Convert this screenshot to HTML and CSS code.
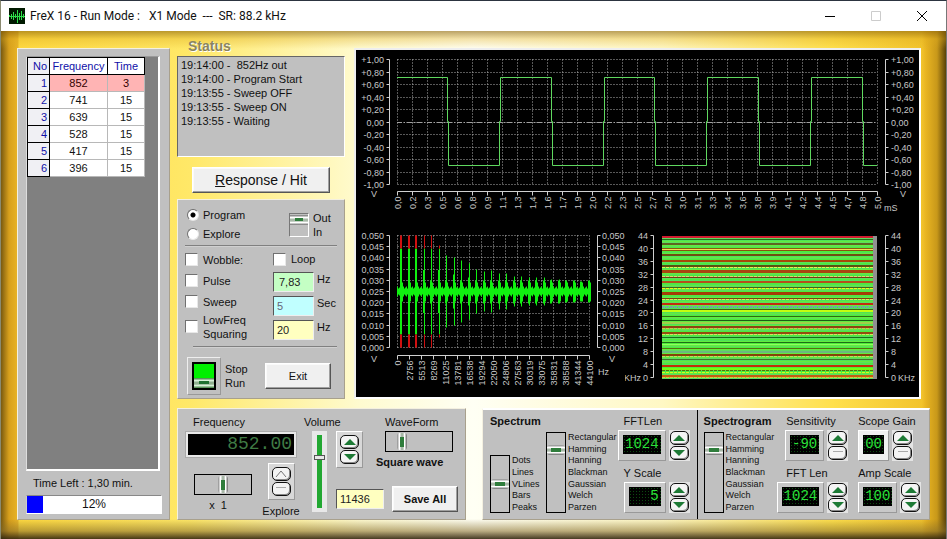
FILE: index.html
```html
<!DOCTYPE html>
<html lang="en">
<head>
    <meta charset="UTF-8">
    <meta name="viewport" content="width=device-width, initial-scale=1.0">
    <title>FreX 16</title>
    <link rel="stylesheet" href="styles.css">
</head>
<body>
    <header class="titlebar">
        <svg class="app-icon" viewBox="0 0 16 16">
            <rect width="16" height="16" fill="#001a00"/>
            <path d="M0.5 7v2M2.5 6v5M4.5 4v8M6.5 6v4M8.5 2v13M10.5 5v7M12.5 3v9M14.5 6v4M0 8.5h16" stroke="#2fe04a" fill="none"/>
        </svg>
        <h1>FreX 16 - Run Mode :   X1 Mode  ---  SR: 88.2 kHz</h1>
        <div class="window-buttons">
            <button aria-label="Minimize"><svg viewBox="0 0 12 12"><path d="M1 6.5h10" stroke="#000"/></svg></button>
            <button aria-label="Maximize" disabled><svg viewBox="0 0 12 12"><path d="M1.5 1.5h9v9h-9z" stroke="#ccc" fill="none"/></svg></button>
            <button aria-label="Close"><svg viewBox="0 0 12 12"><path d="M1 1l10 10M11 1L1 11" stroke="#000"/></svg></button>
        </div>
    </header>

    <main class="frame">
        <section class="panel program-panel">
            <div class="program-list">
                <table>
                    <thead>
                        <tr><th>No</th><th>Frequency</th><th>Time</th></tr>
                    </thead>
                    <tbody>
                        <tr class="active"><th>1</th><td>852</td><td>3</td></tr>
                        <tr><th>2</th><td>741</td><td>15</td></tr>
                        <tr><th>3</th><td>639</td><td>15</td></tr>
                        <tr><th>4</th><td>528</td><td>15</td></tr>
                        <tr><th>5</th><td>417</td><td>15</td></tr>
                        <tr><th>6</th><td>396</td><td>15</td></tr>
                    </tbody>
                </table>
            </div>
            <p class="time-left">Time Left : 1,30 min.</p>
            <div class="progress">
                <div class="progress-fill" style="width: 12%"></div>
                <span>12%</span>
            </div>
        </section>

        <div class="workspace">
            <div class="upper">
                <div class="side">
                    <h2 class="status-title">Status</h2>
                    <div class="status-log">
                        <p>19:14:00 -&nbsp; 852Hz out</p>
                        <p>19:14:00 - Program Start</p>
                        <p>19:13:55 - Sweep OFF</p>
                        <p>19:13:55 - Sweep ON</p>
                        <p>19:13:55 - Waiting</p>
                    </div>
                    <button class="btn btn-response"><u>R</u>esponse / Hit</button>

                    <section class="panel controls">
                        <div class="mode-row">
                            <div class="modes">
                                <label><input type="radio" name="mode" checked>Program</label>
                                <label><input type="radio" name="mode">Explore</label>
                            </div>
                            <label class="out-in"><input type="checkbox" class="toggle"><span>Out<br>In</span></label>
                        </div>
                        <hr>
                        <div class="options">
                            <div class="option-checks">
                                <label><input type="checkbox">Wobble:</label>
                                <label><input type="checkbox">Pulse</label>
                                <label><input type="checkbox">Sweep</label>
                                <label class="two-line"><input type="checkbox"><span>LowFreq<br>Squaring</span></label>
                            </div>
                            <div class="option-values">
                                <label class="loop"><input type="checkbox">Loop</label>
                                <label><input type="text" class="field green" value="7,83">Hz</label>
                                <label><input type="text" class="field cyan" value="5">Sec</label>
                                <label><input type="text" class="field yellow" value="20">Hz</label>
                            </div>
                        </div>
                        <hr class="short">
                        <div class="run-row">
                            <label class="run-label"><span class="run-well"><input type="checkbox" class="run-toggle" checked></span><span>Stop<br>Run</span></label>
                            <button class="btn btn-exit">Exit</button>
                        </div>
                    </section>
                </div>

                <section class="scope">
                    <svg id="oscilloscope" viewBox="0 0 563 166"></svg>
                    <div class="scope-lower">
                        <svg id="spectrum" viewBox="0 0 269 181"></svg>
                        <svg id="spectrogram" viewBox="0 0 294 181"></svg>
                    </div>
                </section>
            </div>

            <div class="lower">
                <section class="panel generator">
                    <div class="frequency">
                        <label for="freq">Frequency</label>
                        <output id="freq" class="led led-wide">852.00</output>
                        <div class="frequency-row">
                            <div class="multiplier">
                                <input type="range" id="mult" class="slider-h" min="0" max="100" value="50">
                                <label for="mult">x&nbsp; 1</label>
                            </div>
                            <div class="explore">
                                <div class="spin raised">
                                    <button aria-label="Explore up"><svg viewBox="0 0 12 8"><path d="M1 7L6 1L11 7" fill="none" stroke="#777"/></svg></button>
                                    <button aria-label="Explore down"><svg viewBox="0 0 12 8"><path d="M1 2.5h10" stroke="#aaa"/></svg></button>
                                </div>
                                <span>Explore</span>
                            </div>
                        </div>
                    </div>
                    <div class="volume">
                        <label for="volume">Volume</label>
                        <input type="range" id="volume" class="slider-volume" min="0" max="100" value="68">
                    </div>
                    <div class="output">
                        <div class="output-row">
                            <div class="spin raised">
                                <button aria-label="Volume up"><svg viewBox="0 0 12 8"><path d="M0 7L6 1L12 7z" fill="#1d7a35"/></svg></button>
                                <button aria-label="Volume down"><svg viewBox="0 0 12 8"><path d="M0 1L6 7L12 1z" fill="#1d7a35"/></svg></button>
                            </div>
                            <div class="waveform">
                                <label for="wave">WaveForm</label>
                                <input type="range" id="wave" class="slider-h" min="0" max="100" value="20">
                                <strong>Square wave</strong>
                            </div>
                        </div>
                        <div class="output-row save-row">
                            <input type="text" class="field yellow" value="11436" aria-label="Sample count">
                            <button class="btn btn-save">Save All</button>
                        </div>
                    </div>
                </section>

                <section class="panel analysis">
                    <div class="analyzer spectrum-settings">
                        <div class="column style-column">
                            <h3>Spectrum</h3>
                            <div class="select-slider">
                                <input type="range" class="slider-v slider-short" min="0" max="4" value="2" aria-label="Draw style">
                                <ul class="options-list short-list">
                                    <li>Dots</li><li>Lines</li><li>VLines</li><li>Bars</li><li>Peaks</li>
                                </ul>
                            </div>
                        </div>
                        <div class="column window-column">
                            <div class="select-slider">
                                <input type="range" class="slider-v" min="0" max="6" value="5" aria-label="Spectrum window">
                                <ul class="options-list">
                                    <li>Rectangular</li><li>Hamming</li><li>Hanning</li><li>Blackman</li><li>Gaussian</li><li>Welch</li><li>Parzen</li>
                                </ul>
                            </div>
                        </div>
                        <div class="column meters meters-end">
                            <div class="meter">
                                <label for="fftlen">FFTLen</label>
                                <div class="meter-row">
                                    <div class="led-box"><output id="fftlen" class="led">1024</output></div>
                                    <div class="spin">
                                        <button aria-label="FFTLen up"><svg viewBox="0 0 12 8"><path d="M0 7L6 1L12 7z" fill="#1d7a35"/></svg></button>
                                        <button aria-label="FFTLen down"><svg viewBox="0 0 12 8"><path d="M0 1L6 7L12 1z" fill="#1d7a35"/></svg></button>
                                    </div>
                                </div>
                            </div>
                            <div class="meter">
                                <label for="yscale">Y Scale</label>
                                <div class="meter-row">
                                    <div class="led-box"><output id="yscale" class="led three">5</output></div>
                                    <div class="spin">
                                        <button aria-label="Y Scale up"><svg viewBox="0 0 12 8"><path d="M0 7L6 1L12 7z" fill="#1d7a35"/></svg></button>
                                        <button aria-label="Y Scale down"><svg viewBox="0 0 12 8"><path d="M0 1L6 7L12 1z" fill="#1d7a35"/></svg></button>
                                    </div>
                                </div>
                            </div>
                        </div>
                    </div>

                    <div class="analyzer spectrogram-settings">
                        <div class="column spectrogram-column">
                            <h3>Spectrogram</h3>
                            <div class="select-slider">
                                <input type="range" class="slider-v" min="0" max="6" value="5" aria-label="Spectrogram window">
                                <ul class="options-list">
                                    <li>Rectangular</li><li>Hamming</li><li>Hanning</li><li>Blackman</li><li>Gaussian</li><li>Welch</li><li>Parzen</li>
                                </ul>
                            </div>
                        </div>
                        <div class="column meters sensitivity">
                            <div class="meter">
                                <label for="sens">Sensitivity</label>
                                <div class="meter-row">
                                    <div class="led-box"><output id="sens" class="led">-90</output></div>
                                    <div class="spin">
                                        <button aria-label="Sensitivity up"><svg viewBox="0 0 12 8"><path d="M0 7L6 1L12 7z" fill="#1d7a35"/></svg></button>
                                        <button aria-label="Sensitivity down"><svg viewBox="0 0 12 8"><path d="M1 2.5h10" stroke="#aaa"/></svg></button>
                                    </div>
                                </div>
                            </div>
                            <div class="meter">
                                <label for="fftlen2">FFT Len</label>
                                <div class="meter-row">
                                    <div class="led-box"><output id="fftlen2" class="led">1024</output></div>
                                    <div class="spin">
                                        <button aria-label="FFT Len up"><svg viewBox="0 0 12 8"><path d="M0 7L6 1L12 7z" fill="#1d7a35"/></svg></button>
                                        <button aria-label="FFT Len down"><svg viewBox="0 0 12 8"><path d="M0 1L6 7L12 1z" fill="#1d7a35"/></svg></button>
                                    </div>
                                </div>
                            </div>
                        </div>
                        <div class="column meters gain">
                            <div class="meter">
                                <label for="gain">Scope Gain</label>
                                <div class="meter-row">
                                    <div class="led-box bright"><output id="gain" class="led">00</output></div>
                                    <div class="spin">
                                        <button aria-label="Scope Gain up"><svg viewBox="0 0 12 8"><path d="M0 7L6 1L12 7z" fill="#1d7a35"/></svg></button>
                                        <button aria-label="Scope Gain down"><svg viewBox="0 0 12 8"><path d="M1 2.5h10" stroke="#aaa"/></svg></button>
                                    </div>
                                </div>
                            </div>
                            <div class="meter">
                                <label for="amp">Amp Scale</label>
                                <div class="meter-row">
                                    <div class="led-box"><output id="amp" class="led">100</output></div>
                                    <div class="spin">
                                        <button aria-label="Amp Scale up"><svg viewBox="0 0 12 8"><path d="M0 7L6 1L12 7z" fill="#1d7a35"/></svg></button>
                                        <button aria-label="Amp Scale down"><svg viewBox="0 0 12 8"><path d="M0 1L6 7L12 1z" fill="#1d7a35"/></svg></button>
                                    </div>
                                </div>
                            </div>
                        </div>
                    </div>
                </section>
            </div>
        </div>
    </main>

    <script src="script.js"></script>
</body>
</html>
```

FILE: styles.css
```css
* {
    margin: 0;
    padding: 0;
    box-sizing: border-box;
    font-family: "Liberation Sans", Arial, sans-serif;
}
body {
    display: flex;
    flex-direction: column;
    min-height: 100vh;
    font-size: 11px;
    line-height: 14px;
    color: #111;
    background: #fff;
    border-top: 1px solid #2c3440;
    border-left: 1px solid #8a8a70;
    border-right: 1px solid #777;
}
button {
    cursor: pointer;
}

/* Title bar */
.titlebar {
    display: flex;
    align-items: center;
    height: 30px;
    padding: 0 18px 0 8px;
    background: #fff;
}
.app-icon {
    width: 16px;
    height: 16px;
    margin-right: 5px;
}
.titlebar h1 {
    font-family: Roboto, "Open Sans", sans-serif;
    font-size: 12px;
    font-weight: normal;
    white-space: pre;
}
.window-buttons {
    display: flex;
    gap: 34px;
    margin-left: auto;
}
.window-buttons button {
    width: 12px;
    height: 12px;
    border: none;
    background: none;
}
.window-buttons svg {
    display: block;
}

/* Golden frame */
.frame {
    flex: 1;
    display: flex;
    gap: 7px;
    padding: 8px 17px 19px 16px;
    background:
        linear-gradient(to bottom, rgba(140, 100, 10, 0.6), rgba(220, 170, 30, 0.35) 8px, transparent 18px),
        linear-gradient(to top, rgba(50, 38, 15, 0.9), rgba(130, 105, 40, 0.55) 8px, transparent 20px),
        linear-gradient(to right, #7a5a10, #d8a01c 8px, #e8b428 17px, transparent 18px),
        linear-gradient(to left, #5a4208, #c8981a 9px, #e8b422 20px, transparent 24px),
        linear-gradient(to right, #ffd83c, #ffe868 20%, #fffbd0 38%, #fffff4 50%, #fff8c4 70%, #ffe04c 88%, #efbc24);
}

.panel {
    background: #c0c0c0;
    border: 1px solid;
    border-color: #f4f0e0 #a8a08c #a8a08c #f4f0e0;
}

/* Program list */
.program-panel {
    display: flex;
    flex-direction: column;
    flex: none;
    width: 153px;
    margin-top: 9px;
    padding: 7px 7px 5px 8px;
}
.program-list {
    flex: 1;
    margin-right: 2px;
    background: #808080;
    border: 1px solid;
    border-color: #999 #fff #fff #ddd;
    border-right-width: 2px;
    border-bottom-width: 2px;
}
.program-list table {
    border-collapse: collapse;
    background: #fff;
    text-align: center;
    border: 1px solid #000;
    border-left-color: #fff;
}
.program-list th,
.program-list td {
    height: 17px;
    line-height: 14px;
    border: 1px solid #b8b8b8;
}
.program-list th {
    font-weight: normal;
    color: #1010a8;
    width: 37px;
    border-color: #000;
}
.program-list th:first-child {
    width: 22px;
    padding-right: 2px;
    text-align: right;
    background: #f0f0f4;
}
.program-list th:nth-child(2) {
    width: 58px;
}
.program-list tr.active td {
    background: #ffb4b4;
    color: #300;
}
.time-left {
    padding: 5px 7px;
}
.progress {
    display: grid;
    height: 19px;
    background: #fff;
    border: 1px solid;
    border-color: #888 #fff #fff #ccc;
}
.progress-fill,
.progress span {
    grid-area: 1 / 1;
}
.progress-fill {
    background: #0000ff;
}
.progress span {
    text-align: center;
    font-size: 12px;
    line-height: 17px;
}

.workspace {
    flex: 1;
    display: flex;
    flex-direction: column;
    gap: 9px;
    min-width: 0;
}
.upper {
    flex: 1;
    display: flex;
    gap: 9px;
    padding-right: 8px;
}
.side {
    display: flex;
    flex-direction: column;
    flex: none;
    width: 168px;
}
.status-title {
    padding-left: 11px;
    font-size: 14px;
    line-height: 15px;
    color: #8a8560;
    text-shadow: 1px 1px #fff;
}
.status-log {
    height: 101px;
    margin-top: 2px;
    padding: 1px 3px;
    background: #c0c0c0;
    border: 1px solid;
    border-color: #666 #fff #fff #666;
}

.btn {
    background: #f0f0f0;
    border: 1px solid;
    border-color: #fff #555 #555 #fff;
    box-shadow: inset -1px -1px #a0a0a0, inset 1px 1px #fafafa;
    color: #111;
}
.btn-response {
    width: 138px;
    height: 26px;
    margin: 10px 0 6px 15px;
    font-size: 14px;
}

/* Controls */
.controls {
    flex: 1;
    display: flex;
    flex-direction: column;
    padding: 5px 7px 3px;
}
.controls label {
    display: flex;
    align-items: center;
}
.controls hr {
    border: none;
    border-top: 1px solid #808080;
    border-bottom: 1px solid #d0d0d0;
}
.controls hr.short {
    margin-left: 8px;
}
.controls input[type="radio"],
.controls input[type="checkbox"] {
    appearance: none;
    flex: none;
    width: 13px;
    height: 13px;
    margin-right: 5px;
    background: #fff;
    border: 1px solid;
    border-color: #707070 #e8e8e8 #e8e8e8 #707070;
}
.controls input[type="radio"] {
    width: 12px;
    height: 12px;
    margin: 0 4px 0 2px;
    border-radius: 50%;
}
.controls input[type="radio"]:checked {
    background: radial-gradient(circle, #000 2px, #fff 3px);
}
.mode-row {
    display: flex;
    justify-content: space-between;
    height: 40px;
}
.modes label {
    height: 19px;
}
.controls input[type="checkbox"].toggle {
    width: 20px;
    height: 24px;
    margin-right: 4px;
    border-color: #777 #fff #fff #777;
    background:
        linear-gradient(#2f7d3c, #2f7d3c) 5px 4px / 8px 3px no-repeat,
        linear-gradient(#707070, #fff 25%, #a8b8a8 45%, #a8b8a8 60%, #fff 75%, #707070) 0 1px / 18px 10px no-repeat,
        #c0c0c0;
}
.out-in {
    width: 48px;
}
.options {
    display: flex;
    justify-content: space-between;
    height: 99px;
    padding-top: 2px;
}
.option-checks label {
    height: 21px;
}
.option-checks label.two-line {
    height: 29px;
}
.option-values {
    width: 64px;
}
.option-values label {
    align-items: flex-start;
    height: 20px;
    margin-bottom: 4px;
    white-space: nowrap;
}
.option-values label.loop {
    align-items: center;
    margin-bottom: 3px;
}
.field {
    width: 41px;
    height: 20px;
    padding: 0 3px;
    border: 1px solid;
    border-color: #555 #eee #eee #555;
    font-size: 11px;
    color: #222;
}
.option-values .field {
    flex: none;
    margin-right: 3px;
}
.green {
    background: #c4ffc4;
    padding-left: 5px;
}
.cyan {
    background: #c0ffff;
    color: #667;
}
.yellow {
    background: #ffffc0;
}
.run-row {
    display: flex;
    align-items: center;
    justify-content: space-between;
    padding: 9px 6px 0 2px;
}
.run-well {
    display: flex;
    align-items: center;
    justify-content: center;
    width: 34px;
    height: 38px;
    margin-right: 4px;
    border: 1px solid;
    border-color: #eee #999 #999 #eee;
}
.controls input[type="checkbox"].run-toggle {
    width: 24px;
    height: 28px;
    margin: 0;
    border: 2px solid #000;
    background:
        linear-gradient(#1f7030, #1f7030) 5px 17px / 10px 3px no-repeat,
        linear-gradient(#3c7c3c, #d8f0d8 25%, #90b090 45%, #90b090 60%, #d8f0d8 75%, #3c7c3c) 0 14px / 20px 10px no-repeat,
        #00f000;
}
.btn-exit {
    width: 66px;
    height: 26px;
    font-size: 11px;
}

/* Scope screen */
.scope {
    flex: 1;
    min-width: 0;
    margin-top: 9px;
    background: #000;
    border: 2px solid;
    border-color: #eee #fff #fff #eee;
}
.scope svg {
    display: block;
    width: 100%;
}
.scope-lower {
    display: grid;
    grid-template-columns: 269fr 294fr;
}
.scope text {
    fill: #c8c8c8;
    font-size: 9px;
}
.axis {
    stroke: #d0d0d0;
    fill: none;
}
.grid {
    stroke: #b0b0b0;
    stroke-dasharray: 1 2;
    fill: none;
}
.grid-zero {
    stroke: #a0a0a0;
    stroke-dasharray: 5 2 1 2;
}
.wave {
    stroke: #5fd85f;
    fill: none;
}
.bars {
    stroke: #10f010;
    fill: none;
}
.bars-clipped {
    stroke: #d01010;
    fill: none;
}

/* Lower panels */
.lower {
    display: flex;
    gap: 16px;
    height: 112px;
}
.generator {
    display: flex;
    flex: none;
    width: 289px;
    padding: 6px 7px 7px;
}
.frequency {
    width: 120px;
}
.frequency > label {
    display: block;
    padding-left: 8px;
}
.led {
    display: block;
    height: 19px;
    padding: 0 2px;
    background-color: #000;
    background-image: radial-gradient(#0c4a10 25%, transparent 30%);
    background-size: 3px 3px;
    font-family: "Liberation Mono", "DejaVu Sans Mono", monospace;
    font-size: 14px;
    line-height: 19px;
    color: #2be03a;
    text-align: right;
}
.led.three {
    width: 32px;
}
.led-wide {
    width: 112px;
    height: 27px;
    margin-top: 2px;
    border: 3px solid #e8e8e8;
    outline: 1px solid #aaa;
    outline-offset: -1px;
    background-image: none;
    font-size: 18px;
    line-height: 21px;
    color: #3f7a44;
}
.frequency-row {
    display: flex;
    align-items: center;
    gap: 14px;
    padding: 5px 0 0 9px;
}
.multiplier {
    width: 58px;
    padding-top: 5px;
    text-align: center;
}
.multiplier label {
    display: block;
    margin-top: 3px;
    padding-right: 10px;
}
.explore {
    display: flex;
    flex-direction: column;
    align-items: center;
    width: 30px;
}
.explore span {
    margin-top: 4px;
}

.spin {
    display: flex;
    flex-direction: column;
    gap: 1px;
    flex: none;
    padding: 1px;
    background: #e4e4e4;
}
.spin.raised {
    padding: 3px;
    border: 1px solid;
    border-color: #fff #999 #999 #fff;
    background: #d8d8d8;
}
.spin button {
    display: flex;
    align-items: center;
    justify-content: center;
    width: 19px;
    height: 14px;
    border: 1px solid #111;
    border-radius: 5px;
    background: #f4f4f4;
    box-shadow: inset -1px -1px #888;
}
.spin svg {
    width: 12px;
    height: 8px;
}

input[type="range"] {
    appearance: none;
    background: #c0c0c0;
    border: 1px solid #000;
}
.slider-h {
    display: block;
    width: 100%;
    height: 21px;
}
.slider-h::-webkit-slider-thumb {
    appearance: none;
    width: 10px;
    height: 17px;
    background:
        linear-gradient(#2f7d3c, #2f7d3c) center / 4px 10px no-repeat,
        linear-gradient(to right, #888, #fff 25%, #a8b8a8 45%, #a8b8a8 60%, #fff 75%, #666);
    border-radius: 3px;
}
.slider-v,
.slider-volume {
    writing-mode: vertical-lr;
    direction: rtl;
}
.slider-v {
    flex: none;
    width: 20px;
    height: 81px;
}
.slider-v.slider-short {
    height: 58px;
}
.slider-v::-webkit-slider-thumb {
    appearance: none;
    width: 18px;
    height: 10px;
    background:
        linear-gradient(#2f7d3c, #2f7d3c) center / 10px 4px no-repeat,
        linear-gradient(#888, #fff 25%, #a8b8a8 45%, #a8b8a8 60%, #fff 75%, #666);
    border-radius: 3px;
}
.volume {
    display: flex;
    flex-direction: column;
    gap: 2px;
    width: 33px;
    padding-left: 1px;
    white-space: nowrap;
}
input[type="range"].slider-volume {
    width: 15px;
    height: 81px;
    margin-left: 8px;
    border: none;
    background: linear-gradient(#22a832, #22a832) center / 5px 73px no-repeat, #e8e8e8;
}
.slider-volume::-webkit-slider-thumb {
    appearance: none;
    width: 11px;
    height: 5px;
    background: #e8e8e8;
    border: 1px solid #555;
}
.output {
    flex: 1;
    display: flex;
    flex-direction: column;
    justify-content: space-between;
}
.output-row {
    display: flex;
    gap: 13px;
}
.output-row .spin {
    align-self: flex-start;
    margin-top: 16px;
}
.waveform {
    width: 75px;
}
.waveform label {
    display: block;
    padding-left: 9px;
}
.waveform .slider-h {
    width: 68px;
    margin: 2px 0 3px 9px;
}
.waveform strong {
    white-space: nowrap;
}
.output-row.save-row {
    align-items: center;
    justify-content: space-between;
    gap: 8px;
}
.save-row .field {
    width: 48px;
}
.btn-save {
    width: 66px;
    height: 26px;
    font-size: 11px;
    font-weight: bold;
}

/* Analysis panel */
.analysis {
    flex: 1;
    display: flex;
    border-top: 2px solid #fff;
}
.analyzer {
    display: flex;
    padding: 4px 7px 6px;
}
.spectrum-settings {
    flex: 216;
    border-right: 1px solid #000;
}
.spectrogram-settings {
    flex: 230;
    padding-left: 6px;
}
.column {
    display: flex;
    flex-direction: column;
    justify-content: space-between;
}
.column h3 {
    font-size: 11px;
    line-height: 14px;
    white-space: nowrap;
}
.style-column {
    width: 56px;
}
.window-column {
    justify-content: flex-end;
    width: 72px;
}
.spectrogram-column {
    width: 73px;
}
.select-slider {
    display: flex;
    gap: 2px;
}
.options-list {
    display: flex;
    flex-direction: column;
    justify-content: space-between;
    height: 81px;
    list-style: none;
    font-size: 9px;
    line-height: 11px;
}
.options-list.short-list {
    height: 58px;
}
.meter {
    display: flex;
    flex-direction: column;
}
.meters {
    flex: 1;
    white-space: nowrap;
}
.meters-end .meter {
    align-items: flex-end;
}
.meters-end label {
    width: 66px;
}
.sensitivity .meter {
    align-items: flex-end;
    padding-right: 10px;
}
.sensitivity label {
    width: 62px;
}
.gain {
    flex: none;
    width: 64px;
}
.meter-row {
    display: flex;
    gap: 3px;
    margin-top: 2px;
}
.led-box {
    padding: 4px;
    background: #c8c8c8;
    border: 1px solid;
    border-color: #fff #999 #999 #fff;
}
.led-box.bright {
    background: #f0f0f0;
}
```

FILE: script.js
```javascript
const NS = 'http://www.w3.org/2000/svg';

function add(svg, tag, attrs, text) {
    const el = document.createElementNS(NS, tag);
    for (const key in attrs) el.setAttribute(key, attrs[key]);
    if (text !== undefined) el.textContent = text;
    svg.appendChild(el);
    return el;
}

// Vertical axis with ticks pointing towards its labels
function drawAxisY(svg, x, ys, labels, side, textX) {
    let d = `M${x} ${ys[0]}V${ys[ys.length - 1]}`;
    ys.forEach((y, i) => {
        d += `M${x} ${y}h${side === 'left' ? -3 : 3}`;
        add(svg, 'text', { x: textX, y: y + 3, 'text-anchor': side === 'left' ? 'end' : 'start' }, labels[i]);
    });
    add(svg, 'path', { d, class: 'axis' });
}

function drawAxisX(svg, y, xs, labels) {
    let d = `M${xs[0]} ${y}H${xs[xs.length - 1]}`;
    xs.forEach((x, i) => {
        d += `M${x} ${y}v4`;
        add(svg, 'text', { transform: `translate(${x + 3} ${y + 5}) rotate(-90)`, 'text-anchor': 'end' }, labels[i]);
    });
    add(svg, 'path', { d, class: 'axis' });
}

function drawGrid(svg, xs, ys) {
    let d = '';
    xs.forEach(x => d += `M${x} ${ys[0]}V${ys[ys.length - 1]}`);
    ys.forEach(y => d += `M${xs[0]} ${y}H${xs[xs.length - 1]}`);
    add(svg, 'path', { d, class: 'grid' });
}

const range = (n, fn) => Array.from({ length: n }, (_, i) => fn(i));
const comma = (v, digits) => v.toFixed(digits).replace('.', ',');

// Oscilloscope
function drawOscilloscope() {
    const svg = document.getElementById('oscilloscope');
    const xs = range(33, i => 41.5 + i * 15);
    const ys = range(11, i => Math.round(9 + i * 12.5) + 0.5);
    drawGrid(svg, xs, ys);
    add(svg, 'path', { d: `M41 ${ys[5]}H521`, class: 'grid-zero' });

    const volts = range(11, i => {
        const v = (5 - i) / 5;
        return (v > 0 ? '+' : '') + comma(v, 2);
    });
    drawAxisY(svg, 33.5, ys, volts, 'left', 28);
    add(svg, 'text', { x: 15, y: 147 }, 'V');
    drawAxisY(svg, 529.5, ys, volts, 'right', 535);
    add(svg, 'text', { x: 544, y: 147 }, 'V');
    drawAxisX(svg, 141.5, xs, range(33, i => comma(i * 5 / 32, 1)));
    add(svg, 'text', { x: 528, y: 161 }, 'mS');

    const high = 27.5, low = 115.5, mid = 71.5;
    let d = `M41 ${high}`;
    [91.5, 143.5, 195.5, 247.5, 298.5, 350.5, 402.5, 454.5, 506.5].forEach((x, i) => {
        if (i % 2 === 0) d += `H${x}V${mid}h1V${low}`;
        else d += `H${x}V${mid}h1V${high}`;
    });
    add(svg, 'path', { d: d + 'H521', class: 'wave' });
}

// Spectrum
function drawSpectrum() {
    const svg = document.getElementById('spectrum');
    const xs = range(17, i => 41.5 + i * 12);
    const ys = range(11, i => Math.round(19 + i * 11.2) + 0.5);
    drawGrid(svg, xs, ys);
    const levels = range(11, i => comma((10 - i) * 0.005, 3));
    drawAxisY(svg, 33.5, ys, levels, 'left', 28);
    add(svg, 'text', { x: 15, y: 146 }, 'V');
    drawAxisY(svg, 241.5, ys, levels, 'right', 246);
    add(svg, 'text', { x: 253, y: 146 }, 'V');
    drawAxisX(svg, 139.5, xs, range(17, i => Math.round(i * 44100 / 16)));
    add(svg, 'text', { x: 242, y: 159 }, 'Hz');

    const peaks = [56, 56, 56, 56, 56, 46, 36, 34, 31, 28, 22, 20, 21, 18, 18, 15, 15, 14, 14, 14, 12, 12, 11, 11, 10, 11];
    const mid = 75.5, limit = 43;
    let bars = '', clipped = '';
    for (let x = 41; x < 234; x++) {
        const k = 3 + (x * 7 % 3);
        bars += `M${x + 0.5} ${mid - k}V${mid + k}`;
    }
    peaks.forEach((p, i) => {
        const x = Math.round(45 + i * 7.5) + 0.5;
        const h = Math.min(p, limit);
        bars += `M${x} ${mid - h}V${mid + h}`;
        if (i < 3) bars += `M${x - 1} ${mid - h}V${mid + h}`;
        bars += `M${x - 1} ${mid - Math.min(h, 11)}V${mid + Math.min(h, 12)}M${x + 1} ${mid - Math.min(h, 9)}V${mid + Math.min(h, 10)}`;
        if (i > 2 && i % 2) bars += `M${x - 1} ${mid - h / 2}V${mid + h / 2}`;
        if (p > limit) {
            clipped += `M${x} ${mid - p}V${mid - limit}M${x} ${mid + limit}V${mid + p}`;
            if (i < 3) clipped += `M${x - 1} ${mid - p}V${mid - limit}M${x - 1} ${mid + limit}V${mid + p}`;
        }
    });
    add(svg, 'path', { d: bars, class: 'bars' });
    add(svg, 'path', { d: clipped, class: 'bars-clipped' });
}

// Spectrogram
function drawSpectrogram() {
    const svg = document.getElementById('spectrogram');
    const top = 20, left = 37, width = 211;
    const ys = range(12, i => Math.round(top + i * 12.9) - 0.5);
    const labels = range(12, i => 44 - i * 4);
    drawAxisY(svg, 28.5, ys, labels, 'left', 23);
    drawAxisY(svg, 260.5, ys, labels, 'right', 266);
    add(svg, 'text', { x: 16, y: 165, 'text-anchor': 'end' }, 'KHz');
    add(svg, 'text', { x: 273, y: 165 }, 'KHz');

    const greens = ['#4fe05a', '#62ec3c', '#5cdc60', '#4cec38'];
    for (let y = 0; y < 143; y++) {
        add(svg, 'rect', { x: left, y: top + y, width, height: 1, fill: greens[y % 4] });
    }
    // [offset, height, colour, dashed]
    const stripes = [
        [0, 2, '#d01c30'], [3, 1, '#2a6a18'], [7, 2, '#5e6422'], [12, 1, '#8a5a10'], [13, 1, '#f0e050'], [14, 1, '#8a5010'],
        [18, 2, '#6e4c14'], [24, 2, '#a44808'], [29, 2, '#5c5010'], [31, 1, '#e8f050', 1], [34, 3, '#a84410'],
        [40, 1, '#e0d070', 1], [41, 1, '#7a3a10'], [45, 2, '#b4501c'], [51, 1, '#446414'], [52, 1, '#f4f020', 1],
        [56, 3, '#a43c08'], [62, 1, '#7a4410'], [63, 1, '#e0e060', 1], [67, 2, '#c42c10'], [70, 2, '#70a8a0', 1],
        [73, 1, '#406414'], [74, 2, '#c4fc10'], [80, 1, '#2c6c10'], [84, 1, '#1c5c18'], [86, 2, '#a0d048'],
        [90, 2, '#904410'], [92, 1, '#d0c050', 1], [96, 2, '#944c10'], [98, 1, '#d8e060', 1], [101, 1, '#1c6c18'],
        [106, 1, '#1c6c18'], [108, 1, '#90fc60'], [112, 1, '#586c10'], [115, 2, '#6cb880'], [118, 2, '#844408'],
        [120, 1, '#c8d860', 1], [123, 1, '#44742c'], [129, 2, '#c42c08'], [132, 2, '#74fc10'], [134, 1, '#5c6c08', 1],
        [136, 1, '#d8f820', 1], [139, 2, '#c85c10'], [141, 1, '#e4c040', 1]
    ];
    stripes.forEach(([y, h, colour, dashed]) => {
        const attrs = { d: `M${left} ${top + y + h / 2}h${width}`, stroke: colour, 'stroke-width': h };
        if (dashed) attrs['stroke-dasharray'] = '3 1';
        add(svg, 'path', attrs);
    });
    add(svg, 'rect', { x: 248, y: top, width: 4, height: 143, fill: '#909090' });
}

drawOscilloscope();
drawSpectrum();
drawSpectrogram();
```
